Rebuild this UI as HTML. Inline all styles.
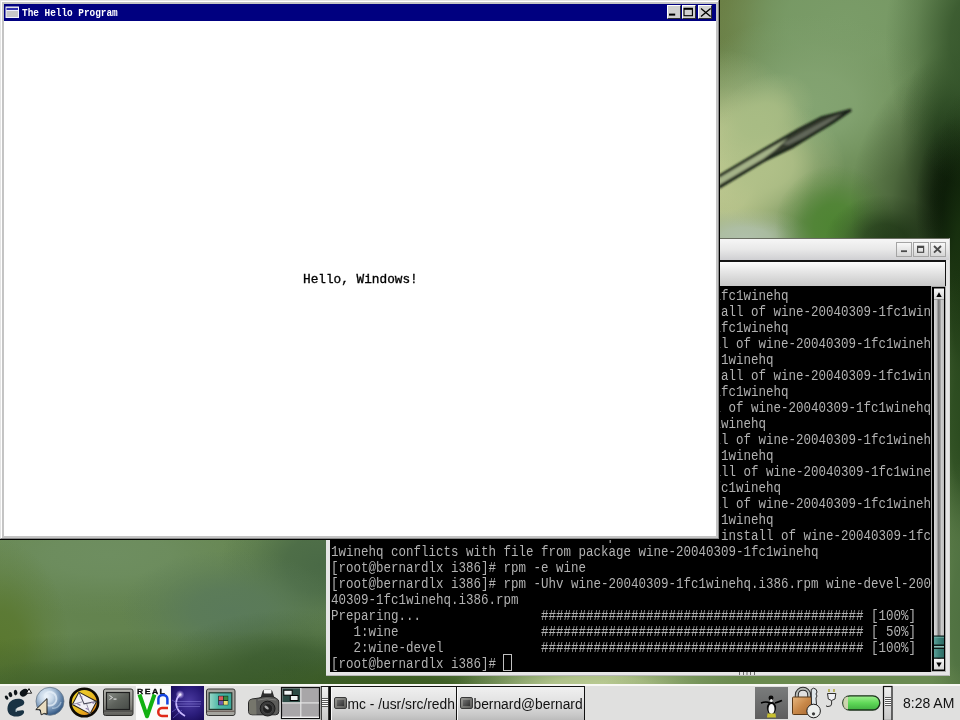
<!DOCTYPE html>
<html><head><meta charset="utf-8"><title>Hello</title>
<style>
*{margin:0;padding:0;box-sizing:border-box}
html,body{width:960px;height:720px;overflow:hidden;background:#5f7f4a;font-family:"Liberation Sans",sans-serif}
.a{position:absolute}
.tx,.tr,#htext,#httl,#clock,.task{will-change:transform}
#wall{left:0;top:0;width:960px;height:684px;overflow:hidden}
/* terminal window */
#term{left:326px;top:238px;width:624px;height:438px;background:#e6e6e6;border-top:1px solid #6a6e62;border-right:1px solid #d8d8d8;border-bottom:1px solid #b8b8b8}
#ttitle{left:326px;top:239px;width:623px;height:21px;background:linear-gradient(#f6f6f6,#e8e8e8 50%,#cfcfd2)}
#tmenu{left:329px;top:260px;width:617px;height:26px;background:linear-gradient(#fdfdfd,#e6e6e6 40%,#c8c8c8);border-top:2px solid #141414;border-right:1px solid #141414}
#tblack{left:330px;top:286px;width:616px;height:386px;background:#000}
#ttext{left:331px;top:286px;width:600px;height:386px;overflow:hidden}
.tr{position:absolute;left:0;font-family:"Liberation Mono",monospace;font-size:12.5px;line-height:16px;height:16px;color:#b2b2b2;white-space:pre;transform-origin:0 0;transform:scaleY(1.23)}
.tbtn{width:16px;height:15px;border:1px solid #a4a4a4;background:linear-gradient(#f8f8f8,#d6d6d6)}
#sb{left:932px;top:287px;width:14px;height:384px;background:#000;border:1px solid #888}
#sbtrough{left:934px;top:299px;width:10px;height:360px;background:linear-gradient(90deg,#d8d8d8 0,#cfcfcf 20%,#888 45%,#999 60%,#d0d0d0 80%,#c8c8c8 100%)}
#sbup{left:934px;top:289px;width:10px;height:10px;background:linear-gradient(#f4f4f4,#d0d0d0)}
#sbdn{left:934px;top:659px;width:10px;height:10px;background:linear-gradient(#f4f4f4,#d0d0d0)}
#sbthumb{left:934px;top:635px;width:10px;height:23px;background:#3d8078}
/* hello window */
#hello{left:0;top:0;width:720px;height:540px;background:#000}
#hframe{left:0;top:0;width:719px;height:539px;background:#c4c4c4;border-top:1px solid #e4e4e4;border-left:1px solid #e4e4e4;border-right:1px solid #8a8a8a;border-bottom:1px solid #8a8a8a;box-shadow:inset 1px 1px 0 #fff}
#htitle{left:4px;top:4px;width:712px;height:17px;background:#000080}
#hclient{left:4px;top:21px;width:712px;height:515px;background:#fff}
#htext{left:303px;top:273px;font-family:"Liberation Mono",monospace;font-size:12.75px;line-height:14px;color:#000;white-space:pre;-webkit-text-stroke:0.35px #000}
#httl{left:22px;top:6px;font-family:"Liberation Mono",monospace;font-weight:bold;font-size:9.4px;color:#fff;white-space:pre;line-height:12px;transform-origin:0 0;transform:scaleY(1.2)}
.hbtn{top:5px;width:14px;height:14px;background:#d0d0d0;border-top:1px solid #fff;border-left:1px solid #fff;border-right:1px solid #303030;border-bottom:1px solid #303030}
/* taskbar */
#tb{left:0;top:684px;width:960px;height:36px;background:#e0e0df;border-top:2px solid #f8f8f4}
.task{top:686px;height:34px;border-top:1px solid #111;border-left:1.5px solid #111;border-right:1.5px solid #111;background:linear-gradient(#f0f0f0,#e2e2e2 45%,#c8c8c8 85%,#bcbcbc);font-size:13.8px;color:#111;white-space:nowrap;overflow:hidden;box-shadow:inset 1px 0 0 #fafafa}
.task span{position:absolute;top:10px;left:16.5px;line-height:normal}
.ticon{position:absolute;left:2.5px;top:10px;width:13px;height:12px;border-radius:2px;background:linear-gradient(135deg,#9a9a96,#5a5a58);border:1px solid #3a3a3a}
.ticon:after{content:"";position:absolute;left:2px;top:2px;width:7px;height:6px;background:linear-gradient(135deg,#707070,#303030)}
#clock{left:903px;top:695px;font-size:14px;color:#111;white-space:nowrap}
</style></head><body>
<div id="wall" class="a"><svg width="960" height="684" viewBox="0 0 960 684" style="position:absolute;left:0;top:0"><defs><radialGradient id="g0"><stop offset="0" stop-color="#66763a" stop-opacity="1"/><stop offset=".35" stop-color="#66763a" stop-opacity=".85"/><stop offset=".7" stop-color="#66763a" stop-opacity=".3"/><stop offset="1" stop-color="#66763a" stop-opacity="0"/></radialGradient><radialGradient id="g1"><stop offset="0" stop-color="#7a9c68" stop-opacity="1"/><stop offset=".35" stop-color="#7a9c68" stop-opacity=".85"/><stop offset=".7" stop-color="#7a9c68" stop-opacity=".3"/><stop offset="1" stop-color="#7a9c68" stop-opacity="0"/></radialGradient><radialGradient id="g2"><stop offset="0" stop-color="#84a472" stop-opacity="1"/><stop offset=".35" stop-color="#84a472" stop-opacity=".85"/><stop offset=".7" stop-color="#84a472" stop-opacity=".3"/><stop offset="1" stop-color="#84a472" stop-opacity="0"/></radialGradient><radialGradient id="g3"><stop offset="0" stop-color="#c4cc94" stop-opacity="1"/><stop offset=".35" stop-color="#c4cc94" stop-opacity=".85"/><stop offset=".7" stop-color="#c4cc94" stop-opacity=".3"/><stop offset="1" stop-color="#c4cc94" stop-opacity="0"/></radialGradient><radialGradient id="g4"><stop offset="0" stop-color="#b0c0aa" stop-opacity="1"/><stop offset=".35" stop-color="#b0c0aa" stop-opacity=".85"/><stop offset=".7" stop-color="#b0c0aa" stop-opacity=".3"/><stop offset="1" stop-color="#b0c0aa" stop-opacity="0"/></radialGradient><radialGradient id="g5"><stop offset="0" stop-color="#b0c088" stop-opacity="1"/><stop offset=".35" stop-color="#b0c088" stop-opacity=".85"/><stop offset=".7" stop-color="#b0c088" stop-opacity=".3"/><stop offset="1" stop-color="#b0c088" stop-opacity="0"/></radialGradient><radialGradient id="g6"><stop offset="0" stop-color="#34562a" stop-opacity="1"/><stop offset=".35" stop-color="#34562a" stop-opacity=".85"/><stop offset=".7" stop-color="#34562a" stop-opacity=".3"/><stop offset="1" stop-color="#34562a" stop-opacity="0"/></radialGradient><radialGradient id="g7"><stop offset="0" stop-color="#a8bc84" stop-opacity="1"/><stop offset=".35" stop-color="#a8bc84" stop-opacity=".85"/><stop offset=".7" stop-color="#a8bc84" stop-opacity=".3"/><stop offset="1" stop-color="#a8bc84" stop-opacity="0"/></radialGradient><radialGradient id="g8"><stop offset="0" stop-color="#4e8432" stop-opacity="1"/><stop offset=".35" stop-color="#4e8432" stop-opacity=".85"/><stop offset=".7" stop-color="#4e8432" stop-opacity=".3"/><stop offset="1" stop-color="#4e8432" stop-opacity="0"/></radialGradient><radialGradient id="g9"><stop offset="0" stop-color="#2e4a22" stop-opacity="1"/><stop offset=".35" stop-color="#2e4a22" stop-opacity=".85"/><stop offset=".7" stop-color="#2e4a22" stop-opacity=".3"/><stop offset="1" stop-color="#2e4a22" stop-opacity="0"/></radialGradient><radialGradient id="g10"><stop offset="0" stop-color="#081604" stop-opacity="1"/><stop offset=".35" stop-color="#081604" stop-opacity=".85"/><stop offset=".7" stop-color="#081604" stop-opacity=".3"/><stop offset="1" stop-color="#081604" stop-opacity="0"/></radialGradient><radialGradient id="g11"><stop offset="0" stop-color="#061204" stop-opacity="1"/><stop offset=".35" stop-color="#061204" stop-opacity=".85"/><stop offset=".7" stop-color="#061204" stop-opacity=".3"/><stop offset="1" stop-color="#061204" stop-opacity="0"/></radialGradient><radialGradient id="g12"><stop offset="0" stop-color="#34542a" stop-opacity="1"/><stop offset=".35" stop-color="#34542a" stop-opacity=".85"/><stop offset=".7" stop-color="#34542a" stop-opacity=".3"/><stop offset="1" stop-color="#34542a" stop-opacity="0"/></radialGradient><radialGradient id="g13"><stop offset="0" stop-color="#1a3410" stop-opacity="1"/><stop offset=".35" stop-color="#1a3410" stop-opacity=".85"/><stop offset=".7" stop-color="#1a3410" stop-opacity=".3"/><stop offset="1" stop-color="#1a3410" stop-opacity="0"/></radialGradient><radialGradient id="g14"><stop offset="0" stop-color="#2a4a1e" stop-opacity="1"/><stop offset=".35" stop-color="#2a4a1e" stop-opacity=".85"/><stop offset=".7" stop-color="#2a4a1e" stop-opacity=".3"/><stop offset="1" stop-color="#2a4a1e" stop-opacity="0"/></radialGradient><radialGradient id="g15"><stop offset="0" stop-color="#4e7040" stop-opacity="1"/><stop offset=".35" stop-color="#4e7040" stop-opacity=".85"/><stop offset=".7" stop-color="#4e7040" stop-opacity=".3"/><stop offset="1" stop-color="#4e7040" stop-opacity="0"/></radialGradient><radialGradient id="g16"><stop offset="0" stop-color="#62824e" stop-opacity="1"/><stop offset=".35" stop-color="#62824e" stop-opacity=".85"/><stop offset=".7" stop-color="#62824e" stop-opacity=".3"/><stop offset="1" stop-color="#62824e" stop-opacity="0"/></radialGradient><radialGradient id="g17"><stop offset="0" stop-color="#6e8e60" stop-opacity="1"/><stop offset=".35" stop-color="#6e8e60" stop-opacity=".85"/><stop offset=".7" stop-color="#6e8e60" stop-opacity=".3"/><stop offset="1" stop-color="#6e8e60" stop-opacity="0"/></radialGradient><radialGradient id="g18"><stop offset="0" stop-color="#5a7830" stop-opacity="1"/><stop offset=".35" stop-color="#5a7830" stop-opacity=".85"/><stop offset=".7" stop-color="#5a7830" stop-opacity=".3"/><stop offset="1" stop-color="#5a7830" stop-opacity="0"/></radialGradient><radialGradient id="g19"><stop offset="0" stop-color="#4a6a46" stop-opacity="1"/><stop offset=".35" stop-color="#4a6a46" stop-opacity=".85"/><stop offset=".7" stop-color="#4a6a46" stop-opacity=".3"/><stop offset="1" stop-color="#4a6a46" stop-opacity="0"/></radialGradient><radialGradient id="g20"><stop offset="0" stop-color="#5a7a5a" stop-opacity="1"/><stop offset=".35" stop-color="#5a7a5a" stop-opacity=".85"/><stop offset=".7" stop-color="#5a7a5a" stop-opacity=".3"/><stop offset="1" stop-color="#5a7a5a" stop-opacity="0"/></radialGradient><radialGradient id="g21"><stop offset="0" stop-color="#3e5e34" stop-opacity="1"/><stop offset=".35" stop-color="#3e5e34" stop-opacity=".85"/><stop offset=".7" stop-color="#3e5e34" stop-opacity=".3"/><stop offset="1" stop-color="#3e5e34" stop-opacity="0"/></radialGradient><radialGradient id="g22"><stop offset="0" stop-color="#3a5a2a" stop-opacity="1"/><stop offset=".35" stop-color="#3a5a2a" stop-opacity=".85"/><stop offset=".7" stop-color="#3a5a2a" stop-opacity=".3"/><stop offset="1" stop-color="#3a5a2a" stop-opacity="0"/></radialGradient><radialGradient id="g23"><stop offset="0" stop-color="#45652a" stop-opacity="1"/><stop offset=".35" stop-color="#45652a" stop-opacity=".85"/><stop offset=".7" stop-color="#45652a" stop-opacity=".3"/><stop offset="1" stop-color="#45652a" stop-opacity="0"/></radialGradient><radialGradient id="g24"><stop offset="0" stop-color="#3a5a20" stop-opacity="1"/><stop offset=".35" stop-color="#3a5a20" stop-opacity=".85"/><stop offset=".7" stop-color="#3a5a20" stop-opacity=".3"/><stop offset="1" stop-color="#3a5a20" stop-opacity="0"/></radialGradient><radialGradient id="g25"><stop offset="0" stop-color="#bccc94" stop-opacity="1"/><stop offset=".35" stop-color="#bccc94" stop-opacity=".85"/><stop offset=".7" stop-color="#bccc94" stop-opacity=".3"/><stop offset="1" stop-color="#bccc94" stop-opacity="0"/></radialGradient><radialGradient id="g26"><stop offset="0" stop-color="#6a8a4e" stop-opacity="1"/><stop offset=".35" stop-color="#6a8a4e" stop-opacity=".85"/><stop offset=".7" stop-color="#6a8a4e" stop-opacity=".3"/><stop offset="1" stop-color="#6a8a4e" stop-opacity="0"/></radialGradient><filter id="bl3" x="-10%" y="-10%" width="120%" height="120%"><feGaussianBlur stdDeviation="0.9"/></filter></defs><rect width="960" height="684" fill="#6a8a54"/><ellipse cx="722" cy="5" rx="70" ry="110" fill="url(#g0)"/><ellipse cx="845" cy="20" rx="170" ry="110" fill="url(#g1)"/><ellipse cx="810" cy="105" rx="130" ry="90" fill="url(#g2)"/><ellipse cx="724" cy="170" rx="90" ry="120" fill="url(#g3)"/><ellipse cx="745" cy="238" rx="70" ry="30" fill="url(#g4)"/><ellipse cx="765" cy="165" rx="80" ry="65" fill="url(#g5)"/><ellipse cx="955" cy="130" rx="55" ry="90" fill="url(#g6)"/><ellipse cx="760" cy="120" rx="60" ry="40" fill="url(#g7)" transform="rotate(-35 760 120)"/><ellipse cx="835" cy="225" rx="60" ry="60" fill="url(#g8)"/><ellipse cx="885" cy="240" rx="60" ry="45" fill="url(#g9)"/><ellipse cx="990" cy="205" rx="140" ry="160" fill="url(#g10)"/><ellipse cx="960" cy="205" rx="45" ry="90" fill="url(#g11)"/><ellipse cx="985" cy="40" rx="100" ry="150" fill="url(#g12)"/><ellipse cx="965" cy="290" rx="40" ry="200" fill="url(#g13)"/><ellipse cx="965" cy="430" rx="40" ry="160" fill="url(#g14)"/><ellipse cx="965" cy="620" rx="40" ry="160" fill="url(#g15)"/><ellipse cx="160" cy="600" rx="260" ry="110" fill="url(#g16)"/><ellipse cx="110" cy="555" rx="170" ry="60" fill="url(#g17)"/><ellipse cx="0" cy="650" rx="70" ry="110" fill="url(#g18)"/><ellipse cx="320" cy="565" rx="100" ry="80" fill="url(#g19)"/><ellipse cx="230" cy="610" rx="110" ry="60" fill="url(#g20)"/><ellipse cx="290" cy="670" rx="130" ry="60" fill="url(#g21)"/><ellipse cx="180" cy="700" rx="360" ry="70" fill="url(#g22)"/><ellipse cx="60" cy="700" rx="120" ry="40" fill="url(#g23)"/><ellipse cx="400" cy="690" rx="160" ry="40" fill="url(#g24)"/><ellipse cx="600" cy="688" rx="150" ry="34" fill="url(#g25)"/><ellipse cx="800" cy="690" rx="200" ry="40" fill="url(#g26)"/><g filter="url(#bl3)">
<path d="M719,175 L763,149 L798,129 L822,116.5 L851,109.5 L833.5,122 L813,134.5 L792,148 L763,162 L719,189 Z" fill="#343a2e"/>
<path d="M719,178 L763,152 L788,138 L775,150 L763,159 L719,185 Z" fill="#a4b288"/>
<path d="M782,144 L805,131 L828,119 L842,113.5 L826,125 L805,137 L788,145 Z" fill="#62685a"/>
<path d="M719,176.2 L763,150 L798,129.8 L822,117.2 L851,109.8" stroke="#182014" stroke-width="2.2" fill="none"/>
<path d="M719,187.2 L763,161 L792,147 L813,134 L833.5,121.8 L851,109.8" stroke="#182014" stroke-width="2.8" fill="none"/>
</g></svg></div>
<div id="term" class="a"></div>
<div id="ttitle" class="a"></div>
<div class="a tbtn" style="left:896px;top:242px"></div>
<div class="a tbtn" style="left:913px;top:242px"></div>
<div class="a tbtn" style="left:930px;top:242px"></div>
<svg class="a" style="left:880px;top:236px" width="70" height="24" viewBox="880 236 70 24">
<rect x="901" y="250.3" width="6" height="1.8" fill="#4a4a4a"/>
<rect x="917.6" y="246.3" width="6" height="6" fill="none" stroke="#4a4a4a" stroke-width="1.2"/>
<rect x="917.6" y="246" width="6" height="2" fill="#4a4a4a"/>
<path d="M934,246 L941,252.6 M941,246 L934,252.6" stroke="#4a4a4a" stroke-width="1.9"/>
</svg>
<div id="tmenu" class="a"></div>
<div id="tblack" class="a"></div>
<div id="ttext" class="a"><div class="tr" style="top:0px">ehq conflicts with file from package wine-20040309-1fc1winehq</div><div class="tr" style="top:16px">           file /usr/lib/wine/winmm.dll.so from install of wine-20040309-1fc1win</div><div class="tr" style="top:32px">ehq conflicts with file from package wine-20040309-1fc1winehq</div><div class="tr" style="top:48px">        file /usr/lib/wine/x11drv.dll.so from install of wine-20040309-1fc1wineh</div><div class="tr" style="top:64px">q conflicts with file from package wine-20040309-1fc1winehq</div><div class="tr" style="top:80px">         file /usr/lib/wine/wsock32.dll.so from install of wine-20040309-1fc1win</div><div class="tr" style="top:96px">ehq conflicts with file from package wine-20040309-1fc1winehq</div><div class="tr" style="top:112px">        file /usr/lib/wine/wow32.dll.so from install of wine-20040309-1fc1winehq</div><div class="tr" style="top:128px"> conflicts with file from package wine-20040309-1fc1winehq</div><div class="tr" style="top:144px">      file /usr/lib/wine/winspool.drv.so from install of wine-20040309-1fc1wineh</div><div class="tr" style="top:160px">q conflicts with file from package wine-20040309-1fc1winehq</div><div class="tr" style="top:176px">       file /usr/lib/wine/wintab32.dll.so from install of wine-20040309-1fc1wine</div><div class="tr" style="top:192px">hq conflicts with file from package wine-20040309-1fc1winehq</div><div class="tr" style="top:208px">       file /usr/lib/wine/winsock.dll.so from install of wine-20040309-1fc1wineh</div><div class="tr" style="top:224px">q conflicts with file from package wine-20040309-1fc1winehq</div><div class="tr" style="top:240px">              file /usr/lib/wine/wineps.dll.so from install of wine-20040309-1fc</div><div class="tr" style="top:256px">1winehq conflicts with file from package wine-20040309-1fc1winehq</div><div class="tr" style="top:272px">[root@bernardlx i386]# rpm -e wine</div><div class="tr" style="top:288px">[root@bernardlx i386]# rpm -Uhv wine-20040309-1fc1winehq.i386.rpm wine-devel-200</div><div class="tr" style="top:304px">40309-1fc1winehq.i386.rpm</div><div class="tr" style="top:320px">Preparing...                ########################################### [100%]</div><div class="tr" style="top:336px">   1:wine                   ########################################### [ 50%]</div><div class="tr" style="top:352px">   2:wine-devel             ########################################### [100%]</div><div class="tr" style="top:368px">[root@bernardlx i386]# </div></div>
<div class="a" style="left:503px;top:654px;width:9px;height:17px;border:1px solid #c0c0c0"></div>
<svg class="a" style="left:735px;top:670px" width="24" height="8" viewBox="735 670 24 8"><g fill="#6a6a6a"><rect x="739" y="672" width="1" height="3"/><rect x="743" y="672" width="1" height="3"/><rect x="746.5" y="672" width="1" height="3"/><rect x="750" y="672" width="1" height="3"/><rect x="754" y="672" width="1" height="3"/></g></svg>
<svg class="a" style="left:930px;top:286px" width="20" height="390" viewBox="930 286 20 390">
<defs><linearGradient id="trg" x1="0" y1="0" x2="1" y2="0"><stop offset="0" stop-color="#d8d8d8"/><stop offset=".25" stop-color="#c4c4c4"/><stop offset=".45" stop-color="#7a7a7a"/><stop offset=".6" stop-color="#8e8e8e"/><stop offset=".75" stop-color="#cacaca"/><stop offset="1" stop-color="#bcbcbc"/></linearGradient>
<linearGradient id="btg" x1="0" y1="0" x2="0" y2="1"><stop offset="0" stop-color="#f6f6f6"/><stop offset="1" stop-color="#d4d4d4"/></linearGradient>
<linearGradient id="thg" x1="0" y1="0" x2="1" y2="0"><stop offset="0" stop-color="#5aa098"/><stop offset=".5" stop-color="#3c8078"/><stop offset="1" stop-color="#2e6c66"/></linearGradient></defs>
<rect x="931.5" y="286.5" width="14" height="385" fill="#000" stroke="#a8a8a8" stroke-width="1"/>
<rect x="934" y="299.5" width="10" height="359" fill="url(#trg)"/>
<rect x="934" y="288.5" width="10" height="11" fill="url(#btg)"/>
<path d="M936.3,297 L939,292.2 L941.7,297 Z" fill="#000"/>
<rect x="934" y="635.5" width="10" height="23" fill="#0e1a18"/>
<rect x="934" y="636.5" width="10" height="8" fill="url(#thg)"/>
<rect x="934" y="646" width="10" height="1.6" fill="#8ac0b8"/>
<rect x="934" y="649" width="10" height="8.5" fill="url(#thg)"/>
<rect x="934" y="637" width="10" height="1" fill="#7ab4ac" opacity=".6"/>
<rect x="934" y="659" width="10" height="10.5" fill="url(#btg)"/>
<path d="M936.3,662.5 L941.7,662.5 L939,667.2 Z" fill="#000"/>
</svg>

<div id="hello" class="a"></div>
<div id="hframe" class="a"></div>
<div id="htitle" class="a"></div>
<div id="hclient" class="a"></div>
<div id="httl" class="a">The Hello Program</div>
<div class="a hbtn" style="left:667px"></div>
<div class="a hbtn" style="left:682px"></div>
<div class="a hbtn" style="left:698px"></div>
<svg class="a" style="left:0;top:0" width="720" height="22" viewBox="0 0 720 22">
<rect x="6" y="7" width="12.5" height="10.5" fill="#c8c8c8" stroke="#f4f4ff" stroke-width="1"/>
<rect x="6.5" y="8" width="11.5" height="2" fill="#3030b0"/>
<rect x="6.5" y="10" width="11.5" height="1" fill="#f0f0ff"/>
<rect x="669" y="13.6" width="6.2" height="2" fill="#000"/>
<rect x="684" y="8.3" width="8.4" height="7.4" fill="none" stroke="#000" stroke-width="1.1"/>
<rect x="684" y="8" width="8.4" height="1.8" fill="#000"/>
<path d="M701,8.6 L710.6,16.6 M710.6,8.6 L701,16.6" stroke="#000" stroke-width="1.3"/>
</svg>
<div id="htext" class="a">Hello, Windows!</div>

<div id="tb" class="a"></div>
<svg class="a" style="left:0;top:684px;will-change:transform" width="960" height="36" viewBox="0 684 960 36">
<defs>
<radialGradient id="globeg" cx="0.38" cy="0.32" r="0.78"><stop offset="0" stop-color="#f0f6fc"/><stop offset=".3" stop-color="#c8d8e8"/><stop offset=".6" stop-color="#7896b8"/><stop offset=".85" stop-color="#3a5e88"/><stop offset="1" stop-color="#2a4a70"/></radialGradient>
<linearGradient id="mailg" x1="0" y1="0" x2="1" y2="1"><stop offset="0" stop-color="#f2d830"/><stop offset=".55" stop-color="#e8b820"/><stop offset="1" stop-color="#e06a10"/></linearGradient>
<linearGradient id="monbody" x1="0" y1="0" x2="0" y2="1"><stop offset="0" stop-color="#b4b4ae"/><stop offset=".6" stop-color="#8a8a84"/><stop offset="1" stop-color="#5e5e5a"/></linearGradient>
<linearGradient id="monscr" x1="0" y1="0" x2="1" y2="1"><stop offset="0" stop-color="#8a8e88"/><stop offset=".5" stop-color="#5e625c"/><stop offset="1" stop-color="#464a46"/></linearGradient>
<linearGradient id="winscr" x1="0" y1="0" x2="1" y2="0"><stop offset="0" stop-color="#9ad8c8"/><stop offset=".4" stop-color="#50b8a8"/><stop offset="1" stop-color="#3aa898"/></linearGradient>
<radialGradient id="purpg" cx="0.55" cy="0.45" r="0.7"><stop offset="0" stop-color="#4a3aa0"/><stop offset=".6" stop-color="#2a1c7a"/><stop offset="1" stop-color="#180c58"/></radialGradient>
<linearGradient id="lockg" x1="0" y1="0" x2="1" y2="1"><stop offset="0" stop-color="#e8b880"/><stop offset=".5" stop-color="#c88848"/><stop offset="1" stop-color="#a86830"/></linearGradient>
<linearGradient id="batg" x1="0" y1="0" x2="0" y2="1"><stop offset="0" stop-color="#a0f090"/><stop offset=".5" stop-color="#60d858"/><stop offset="1" stop-color="#40b040"/></linearGradient>
<linearGradient id="tileg" x1="0" y1="0" x2="0" y2="1"><stop offset="0" stop-color="#7a7c7c"/><stop offset="1" stop-color="#5e5e5e"/></linearGradient>
<linearGradient id="handg" x1="0" y1="0" x2="0" y2="1"><stop offset="0" stop-color="#f0f0f0"/><stop offset="1" stop-color="#c8c8c8"/></linearGradient>
<radialGradient id="glow" cx="0.5" cy="0.5" r="0.5"><stop offset="0" stop-color="#fff" stop-opacity="1"/><stop offset="1" stop-color="#c0a0ff" stop-opacity="0"/></radialGradient>
</defs>
<!-- GNOME foot -->
<g fill="#0e1418">
<ellipse cx="6.6" cy="697.6" rx="1.5" ry="2.3" transform="rotate(-35 6.6 697.6)"/>
<ellipse cx="10.4" cy="694.6" rx="1.8" ry="2.6" transform="rotate(-20 10.4 694.6)"/>
<ellipse cx="15.6" cy="692.6" rx="1.8" ry="2.8" transform="rotate(-8 15.6 692.6)"/>
<ellipse cx="24" cy="692.7" rx="3.3" ry="4.5" transform="rotate(55 24 692.7)"/>
<path d="M24.3,702.5 C24.3,698.5 17.5,697.6 12.5,700 C7.5,702.5 6,709.5 9,713.8 C12,717.5 20,717.5 23.2,714 C24.8,712.2 24.2,710 22,710.2 L18.2,710.8 C16,711 15.3,709 17.2,707.8 C20,706.2 24.3,705.8 24.3,702.5 Z" fill="#1a3344"/>
</g>
<path d="M15.8,708.6 L17.2,711.6 L15.5,711.8 Z" fill="#d8eef4"/>
<path d="M26.5,693.2 L29,688.6 L31.6,693.2 Z" fill="#fff" stroke="#000" stroke-width="0.9"/>
<!-- globe -->
<circle cx="50" cy="701.3" r="14" fill="url(#globeg)" stroke="#6a7a8a" stroke-width=".8"/>
<path d="M46,699 C43,695 47,691 51,692 C56,693 58,699 55,703 C52,707 46,706 44,703" stroke="#e8f2fa" stroke-width="1.8" fill="none" opacity=".75"/>
<path d="M52,708 C56,709 60,706 61,702" stroke="#c0d4e6" stroke-width="1.4" fill="none" opacity=".6"/>
<path d="M47,698.6 L35.8,709.6 L40.2,709.8 L41.2,714.8 L44.4,713.4 L47,714.2 Z" fill="#e8dcc0" stroke="#1a1a1a" stroke-width="1"/>
<!-- mail circle -->
<circle cx="84.3" cy="702.5" r="13.8" fill="url(#mailg)" stroke="#0e0a04" stroke-width="2.6"/>
<g transform="rotate(28 84.5 703)">
<rect x="74.5" y="696" width="20" height="14" fill="#f2f0f6" stroke="#2a2418" stroke-width="1.1"/>
<path d="M74.5,696 L84.5,704 L94.5,696" fill="none" stroke="#4a4a5a" stroke-width="1.1"/>
<path d="M74.5,710 L82,703 M94.5,710 L87,703" fill="none" stroke="#8a8aa0" stroke-width=".8"/>
<path d="M77,699 h3 M90,699 h3 M78,707 h4 M88,707 h3" stroke="#9080b0" stroke-width="1.2"/>
</g>
<!-- terminal monitor -->
<rect x="103.5" y="689" width="29.5" height="26.5" rx="2" fill="url(#monbody)" stroke="#2e2e2c" stroke-width="1"/>
<rect x="106.5" y="692.5" width="23" height="17" fill="url(#monscr)" stroke="#1e1e1e" stroke-width="1.2"/>
<path d="M109.5,695.5 L112.5,697.5 L109.5,699.5" stroke="#e0e0e0" stroke-width="1" fill="none"/>
<rect x="113.5" y="698.5" width="3" height="1.2" fill="#e0e0e0"/>
<path d="M104,711 H132.5" stroke="#3a3a38" stroke-width="1"/>
<!-- RealVNC -->
<rect x="136" y="686" width="34.5" height="34" fill="#fbfbfb"/>
<text x="137" y="693.6" font-family="Liberation Sans" font-weight="bold" font-size="8.6" letter-spacing="1.5" fill="#0a0a0a" stroke="#0a0a0a" stroke-width=".35" transform="translate(0 693.6) scale(1 0.75) translate(0 -693.6)">REAL</text>
<path d="M139.5,694.5 L147,716.3 L154.5,694.5" stroke="#12b012" stroke-width="4" fill="none" stroke-linejoin="round"/>
<path d="M158.4,704.5 V699 C158.4,693.8 167.4,693.8 167.4,699 V704.5" stroke="#1444e0" stroke-width="2.5" fill="none"/>
<path d="M168,708 H162 C157,708 157,716 162,716 H168" stroke="#e02a1a" stroke-width="2.5" fill="none"/>
<!-- purple square -->
<rect x="171" y="686" width="33" height="34" fill="url(#purpg)"/>
<path d="M201,701.5 H177 M201,704 H176 M200,706.5 H177" stroke="#8a80d8" stroke-width=".9" opacity=".6"/>
<path d="M181,694 C174,699 174,710 185,716" stroke="#c8b8ff" stroke-width="1.8" fill="none"/><path d="M172,712 L180,706 M173,718 L182,710 M172,700 L177,703" stroke="#6a60c8" stroke-width="1" opacity=".7"/>
<circle cx="180" cy="694.6" r="4.5" fill="url(#glow)"/>
<!-- win monitor -->
<rect x="206.5" y="689" width="28.5" height="26.5" rx="2" fill="#a4a49e" stroke="#363634" stroke-width="1"/>
<rect x="209.2" y="692.8" width="22.6" height="16.6" fill="url(#winscr)" stroke="#243a30" stroke-width="1.2"/>
<rect x="218.2" y="695.8" width="10" height="9.4" fill="#101820"/>
<rect x="218.8" y="696.3" width="4.2" height="4" fill="#e05a5a"/>
<rect x="223.6" y="696.3" width="4.2" height="4" fill="#3a8a3a"/>
<rect x="218.8" y="701" width="4.2" height="3.8" fill="#6a58b0"/>
<rect x="223.6" y="701" width="4.2" height="3.8" fill="#e8e070"/>
<path d="M207,711.2 H234.5" stroke="#5a4a44" stroke-width="1"/>
<!-- camera -->
<path d="M260.5,698 L262.5,691.5 Q263,689.5 265,689.5 H270 Q272,689.5 272.5,691.5 L274.5,698 Z" fill="#2e2e2e"/>
<rect x="263.8" y="689.4" width="7.6" height="4" rx=".6" fill="#f4f4f4"/>
<path d="M248.5,703 Q248.5,699.5 252,699 L259,698 Q262,696.5 266,696.5 L270,696.5 Q274,696.5 276.5,698.5 Q278.8,699.5 278.8,702 L278.8,711.5 Q278.8,714.8 275.5,714.8 L252,714.8 Q248.5,714.8 248.5,711.5 Z" fill="#5c5c5a" stroke="#262626" stroke-width="1"/>
<path d="M249,702.5 Q249,700 252,699.5 L256,699.2 L256.5,714.5 L252,714.5 Q249,714.5 249,711.5 Z" fill="#76766c"/>
<path d="M258,700 Q266,697.5 276,700" stroke="#8a8a88" stroke-width=".8" fill="none"/>
<circle cx="267.6" cy="708.6" r="7.4" fill="#3a3a3a" stroke="#1a1a1a" stroke-width="1"/>
<circle cx="267.6" cy="708.6" r="5" fill="#202020" stroke="#555" stroke-width=".6"/>
<ellipse cx="266.6" cy="707.5" rx="2.6" ry="1.3" transform="rotate(40 266.6 707.5)" fill="#a8a8a8"/>
<!-- pager -->
<rect x="281.5" y="687.5" width="38" height="31" fill="#a8a6a8" stroke="#101010" stroke-width="1.2"/>
<rect x="282.5" y="688.5" width="18" height="14" fill="#2c4a44"/>
<rect x="300.2" y="688" width="1.2" height="29" fill="#e4e4e4"/>
<rect x="282" y="702.3" width="37" height="1.2" fill="#e4e4e4"/>
<rect x="282" y="716.6" width="37" height="1.4" fill="#f2f2f2"/>
<rect x="283.8" y="690.2" width="8.4" height="5" fill="#eef2f2" stroke="#000" stroke-width="1"/>
<rect x="290.3" y="695.5" width="7.8" height="5" fill="#eef2f2" stroke="#000" stroke-width="1"/>
<!-- handle -->
<rect x="321.3" y="686.5" width="7.5" height="34" fill="url(#handg)" stroke="#1a1a1a" stroke-width="1"/>
<rect x="328.6" y="686" width="1.6" height="34" fill="#0a0a0a"/>
<g fill="#5a5a5a"><rect x="322" y="698" width="6" height="1"/><rect x="322" y="700" width="6" height="1"/><rect x="322" y="702" width="6" height="1"/><rect x="322" y="704" width="6" height="1"/><rect x="322" y="706" width="6" height="1"/></g><g fill="#fff"><rect x="322" y="699" width="6" height="1"/><rect x="322" y="701" width="6" height="1"/><rect x="322" y="703" width="6" height="1"/><rect x="322" y="705" width="6" height="1"/></g>
<!-- penguin tile -->
<rect x="755" y="687" width="33" height="32" fill="url(#tileg)"/>
<path d="M761,703 C765,701.5 768,702 770,703 M775,703 C778,702 781,701 782,700.5" stroke="#000" stroke-width="1.6" fill="none"/>
<ellipse cx="771.5" cy="708" rx="4.6" ry="6.3" fill="#0a0a0a"/>
<ellipse cx="771.5" cy="709" rx="3" ry="5" fill="#f8f8f8"/>
<ellipse cx="771" cy="698" rx="2.5" ry="2.4" fill="#0a0a0a"/>
<ellipse cx="771.3" cy="700.5" rx="1.3" ry="1.6" fill="#f0f0f0"/>
<path d="M767.5,713.5 H775.5 L776,717.5 H767 Z" fill="#c8c030"/>
<!-- lock -->
<path d="M796.8,698 V695 C796.8,686.8 809.2,686.8 809.2,695 V698" stroke="#2e2e2e" stroke-width="4" fill="none"/>
<path d="M796.8,698 V695 C796.8,686.8 809.2,686.8 809.2,695 V698" stroke="#b8bcb8" stroke-width="2" fill="none"/>
<rect x="792.5" y="697" width="19" height="17.5" rx="1" fill="url(#lockg)" stroke="#5a3a18" stroke-width="1"/>
<path d="M811.2,689.5 Q813.5,686.8 816.2,689.5 L817,692 L816,694 L817,696 L816,698 L816.5,705 L811.5,705 Z" fill="#dfe6ea" stroke="#2a2a2a" stroke-width="1"/>
<circle cx="813.6" cy="711" r="6.8" fill="#eceeec" stroke="#1e1e1e" stroke-width="1"/>
<circle cx="813.5" cy="713.8" r="1.6" fill="#3a3a3a"/>
<!-- plug -->
<path d="M829,689 V692 M834,689 V692" stroke="#b0a840" stroke-width="1.6"/>
<path d="M827.5,693.5 H835.8 L835,699 Q831.5,702 828.3,699 Z" fill="#f0f0f4" stroke="#1a1a1a" stroke-width=".9"/>
<path d="M831.6,701 V704 Q831.6,706.5 828,706.5 Q826,706.8 826.5,705.5" stroke="#1a1a1a" stroke-width=".9" fill="none"/>
<!-- battery -->
<rect x="842.8" y="695.8" width="37" height="14.2" rx="7" fill="url(#batg)" stroke="#1a301a" stroke-width="1.3"/>
<path d="M848,696.5 Q843.2,696.5 843.2,703 Q843.2,709.4 848,709.4 Z" fill="#d8d4b8" opacity=".9"/>
<!-- tray handle -->
<rect x="883.5" y="686.5" width="8.5" height="34" fill="url(#handg)" stroke="#111" stroke-width="1.2"/>
<g fill="#5a5a5a"><rect x="885" y="697" width="6" height="1"/><rect x="885" y="699" width="6" height="1"/><rect x="885" y="701" width="6" height="1"/><rect x="885" y="703" width="6" height="1"/><rect x="885" y="705" width="6" height="1"/></g><g fill="#fff"><rect x="885" y="698" width="6" height="1"/><rect x="885" y="700" width="6" height="1"/><rect x="885" y="702" width="6" height="1"/><rect x="885" y="704" width="6" height="1"/></g>
</svg>

<div class="a task" style="left:330px;width:127px"><div class="ticon"></div><span>mc - /usr/src/redh</span></div>
<div class="a task" style="left:455.5px;width:128.5px"><div class="ticon"></div><span>bernard@bernard</span></div>
<div id="clock" class="a">8:28 AM</div>
</body></html>
